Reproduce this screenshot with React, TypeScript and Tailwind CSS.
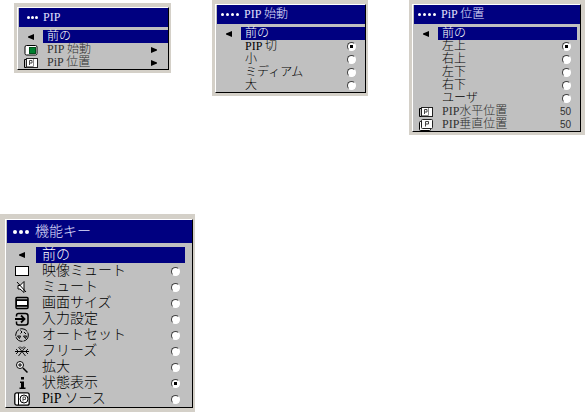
import { clsx } from "clsx";
import type { ReactNode } from "react";

type Row = {
  label: string;
  icon?: ReactNode;
  kind: "back" | "menu" | "radio" | "value";
  checked?: boolean;
  value?: string;
};

const ArrowLeft = () => (
  <svg viewBox="0 0 6 6" className="mx-auto size-[6px]" fill="#000">
    <path d="M6 0v6L0 3.6V2.6z" />
  </svg>
);

const ArrowRight = () => (
  <svg viewBox="0 0 6 6" className="size-[6px]" fill="#000">
    <path d="M0 0v6l6-2.4v-1z" />
  </svg>
);

const Icon = ({ children, large }: { children: ReactNode; large?: boolean }) => (
  <svg
    viewBox={large ? "0 0 16 14" : "0 0 14 12"}
    className={clsx("mx-auto", large ? "h-[14px] w-[16px]" : "h-[12px] w-[14px]")}
    fill="none"
    stroke="#000"
  >
    {children}
  </svg>
);

const PipStartIcon = () => (
  <Icon>
    <rect x="1" y="1.5" width="12" height="9.500" rx="1.5" fill="#fff" />
    <rect x="5.500" y="3.500" width="6" height="6" fill="#008030" stroke="#00501a" />
  </Icon>
);

const PipHorizontalIcon = () => (
  <Icon>
    <path d="M3 10.500H.5v-8H3" />
    <rect x="2.500" y="1.500" width="11" height="9" fill="#fff" stroke="#222" />
    <path d="M9.500 2v7.500H3" stroke="#888" />
    <path d="M5.500 8V3.500h2.500v2.500H6" stroke="#444" />
  </Icon>
);

const PipVerticalIcon = () => (
  <Icon>
    <rect x=".5" y="2.500" width="11" height="9" rx="1" fill="#fff" />
    <rect x="2.500" y=".5" width="11" height="9" rx="1" fill="#fff" stroke="#222" />
    <path d="M6.500 7.500V2.500h3v2.500H7" stroke="#444" />
  </Icon>
);

const BlankIcon = () => (
  <Icon large>
    <rect x="1.500" y="2.500" width="13" height="9" fill="#fff" />
  </Icon>
);

const MuteIcon = () => (
  <Icon large>
    <path d="M4 5.500h2l4-4v11L6 9H4z" fill="#fff" />
    <path d="M3 2l9 10" />
  </Icon>
);

const SizeIcon = () => (
  <Icon large>
    <rect x="2" y="1.500" width="12" height="11" rx="1" strokeWidth="1.500" />
    <path d="M2 4h12M2 10h12" strokeWidth="1.500" />
    <rect x="2.500" y="4.500" width="11" height="5" fill="#fff" />
  </Icon>
);

const InputIcon = () => (
  <Icon large>
    <path
      d="M2.500 4.500V3.500Q2.500 1.500 4.500 1.500h7q2.500 0 2.500 2.500v6.500q0 2.500-2.500 2.500h-7q-2 0-2-2V9.500"
      strokeWidth="1.500"
    />
    <path d="M1 7h9M7 3.500L10.500 7 7 10.500" strokeWidth="1.800" />
  </Icon>
);

const AutoIcon = () => (
  <Icon large>
    <circle cx="8" cy="7" r="6.300" strokeDasharray="8 1" />
    <path d="M6.500 2.500l1.500 1.500-1.500 1.500M3.500 8h3l-1 2.500-2-2.500M9.500 8h3l-1 2.500-2-2.500M10 4l2 2" />
  </Icon>
);

const FreezeIcon = () => (
  <Icon large>
    <path d="M1 7.500h14" />
    <path d="M4.500 3l7 9M11.500 3l-7 9M2 5l2.500 2.500L2 10M14 5l-2.500 2.500L14 10M6 2.500l2 2 2-2" strokeWidth=".9" />
  </Icon>
);

const ZoomIcon = () => (
  <Icon large>
    <circle cx="6" cy="5" r="3.500" fill="#fff" />
    <path d="M4 5h4M6 3v4" />
    <path d="M9 8l4.500 4.500" strokeWidth="1.500" />
  </Icon>
);

const InfoIcon = () => (
  <Icon large>
    <path d="M7 1h3v2.500H7zM6 5.500h4v6h1.500V13H5.500v-1.500H7V7H6z" fill="#000" stroke="none" />
  </Icon>
);

const PipSourceIcon = () => (
  <Icon large>
    <rect x=".8" y=".8" width="14.400" height="12.400" rx="2" fill="#fff" strokeWidth="1.300" />
    <path d="M4.500 1v12" />
    <circle cx="10" cy="7" r="4" />
    <path d="M9 9.500V5h2.500v2.500H9" stroke="#555" />
  </Icon>
);

type PanelProps = {
  id: string;
  title: string;
  depth: number;
  rows: Row[];
  large?: boolean;
  frame?: string;
  inset?: string;
};

const Panel = ({ id, title, depth, rows, large, frame = "pr-[2px]", inset }: PanelProps) => {
  const text = clsx("flex-1 whitespace-nowrap text-left", large ? "pl-[6px]" : "pl-1");
  const iconCell = clsx("shrink-0", large ? "w-[29px]" : "w-6");
  const line = clsx("flex w-full items-center", large ? "h-4" : "h-[13px]");

  return (
    <section
      className={clsx(
        "bg-[#d4d0c8]",
        large ? "pb-1 pl-[5px] pt-[5px] text-[14px] leading-4" : "pb-[3px] pl-[3px] pt-1 text-[12px] leading-[13px]",
        frame
      )}
    >
      <div className="border border-b-black border-l-white border-r-black border-t-white bg-[#c0c0c0] pl-px">
        <h2
          className={clsx(
            "flex items-center bg-[#000080] font-light text-[#e0e0ff]",
            large ? "h-[23px] gap-[6px] pl-[6px]" : "h-[19px] gap-[5px]",
            !large && (depth > 3 ? "pl-1" : "pl-2")
          )}
        >
          <span className={clsx("flex", large || depth > 3 ? "gap-[2px]" : "gap-px")}>
            {Array.from({ length: depth }, (_, i) => (
              <span key={i} className={clsx("rounded-full bg-white", large ? "size-1" : "size-[3px]")} />
            ))}
          </span>
          {title}
        </h2>
        <ul className={clsx(large ? "pt-1" : "pt-[3px]")}>
          {rows.map((row) => (
            <li key={row.label}>
              {row.kind === "back" && (
                <button type="button" className={line}>
                  <span className={iconCell}>
                    <ArrowLeft />
                  </span>
                  <span className={clsx(text, inset, "bg-[#000080] text-white")}>{row.label}</span>
                </button>
              )}
              {row.kind === "menu" && (
                <button type="button" className={clsx(line, "pr-[11px] text-[#303030]")}>
                  <span className={iconCell}>{row.icon}</span>
                  <span className={text}>{row.label}</span>
                  <ArrowRight />
                </button>
              )}
              {row.kind === "radio" && (
                <label className={clsx(line, large ? "pr-3" : "pr-[9px]")}>
                  <span className={iconCell}>{row.icon}</span>
                  <span className={text}>{row.label}</span>
                  <input
                    type="radio"
                    name={id}
                    defaultChecked={row.checked}
                    className="size-[9px] shrink-0 appearance-none rounded-full border border-b-white border-l-[#404040] border-r-white border-t-[#404040] bg-white checked:bg-[radial-gradient(circle,#000_1.5px,#fff_2px)]"
                  />
                </label>
              )}
              {row.kind === "value" && (
                <div className={clsx(line, "pr-[9px] text-[#303030]")}>
                  <span className={iconCell}>{row.icon}</span>
                  <span className={text}>{row.label}</span>
                  <span className="font-['Liberation_Sans',sans-serif] text-[10px]">{row.value}</span>
                </div>
              )}
            </li>
          ))}
        </ul>
      </div>
    </section>
  );
};

const back: Row = { label: "前の", kind: "back" };

const pipRows: Row[] = [
  back,
  { label: "PIP 始動", kind: "menu", icon: <PipStartIcon /> },
  { label: "PiP 位置", kind: "menu", icon: <PipHorizontalIcon /> },
];

const startRows: Row[] = [
  back,
  { label: "PIP 切", kind: "radio", checked: true },
  { label: "小", kind: "radio" },
  { label: "ミディアム", kind: "radio" },
  { label: "大", kind: "radio" },
];

const positionRows: Row[] = [
  back,
  { label: "左上", kind: "radio", checked: true },
  { label: "右上", kind: "radio" },
  { label: "左下", kind: "radio" },
  { label: "右下", kind: "radio" },
  { label: "ユーザ", kind: "radio" },
  { label: "PIP水平位置", kind: "value", value: "50", icon: <PipHorizontalIcon /> },
  { label: "PIP垂直位置", kind: "value", value: "50", icon: <PipVerticalIcon /> },
];

const keyRows: Row[] = [
  back,
  { label: "映像ミュート", kind: "radio", icon: <BlankIcon /> },
  { label: "ミュート", kind: "radio", icon: <MuteIcon /> },
  { label: "画面サイズ", kind: "radio", icon: <SizeIcon /> },
  { label: "入力設定", kind: "radio", icon: <InputIcon /> },
  { label: "オートセット", kind: "radio", icon: <AutoIcon /> },
  { label: "フリーズ", kind: "radio", icon: <FreezeIcon /> },
  { label: "拡大", kind: "radio", icon: <ZoomIcon /> },
  { label: "状態表示", kind: "radio", checked: true, icon: <InfoIcon /> },
  { label: "PiP ソース", kind: "radio", icon: <PipSourceIcon /> },
];

export default function App() {
  return (
    <main
      lang="ja"
      className="bg-white font-['Liberation_Serif','Noto_Sans_CJK_JP',serif] font-light text-black"
    >
      <div className="grid grid-cols-[157fr_156fr_176fr] items-start gap-x-[41px] pl-[14px]">
        <div className="pt-[3px]">
          <Panel id="pip" title="PIP" depth={3} rows={pipRows} />
        </div>
        <Panel id="pip-start" title="PIP 始動" depth={4} rows={startRows} />
        <Panel id="pip-position" title="PiP 位置" depth={4} rows={positionRows} frame="pr-1" inset="mr-[3px]" />
      </div>
      <div className="mt-[79px] w-1/3">
        <Panel id="keys" title="機能キー" depth={3} rows={keyRows} large inset="mr-[7px]" />
      </div>
    </main>
  );
}
